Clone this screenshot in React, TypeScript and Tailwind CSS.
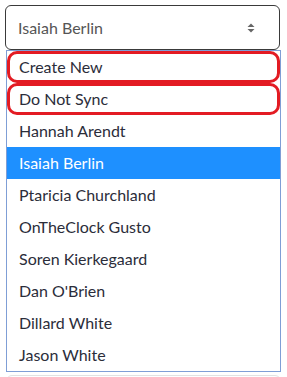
import { ChevronsUpDown } from "lucide-react";

const people = [
  "Create New",
  "Do Not Sync",
  "Hannah Arendt",
  "Isaiah Berlin",
  "Ptaricia Churchland",
  "OnTheClock Gusto",
  "Soren Kierkegaard",
  "Dan O'Brien",
  "Dillard White",
  "Jason White",
];

const flagged = ["Create New", "Do Not Sync"];

export default function App() {
  const selected = "Isaiah Berlin";

  return (
    <div className="w-[287px] h-[377px] overflow-hidden bg-white pt-[5px] pl-[5px] font-['Lato',sans-serif]">
      {/* Select */}
      <div className="w-[275px] h-[45px] flex items-center justify-between rounded-[6px] border border-[#3a3a3a] bg-white pl-[12px] pr-[24px]">
        <span className="text-[16px] text-[#555]">{selected}</span>
        <svg width="8" height="10" viewBox="0 0 8 10" className="text-[#666]">
          <path d="M4 0.5 L7.5 4 L0.5 4 Z" fill="currentColor" />
          <path d="M4 9.5 L7.5 6 L0.5 6 Z" fill="currentColor" />
        </svg>
      </div>

      {/* Options */}
      <div className="ml-px w-[275px] border border-[#7f9ed6] bg-white">
        {people.map((name) => (
          <div
            key={name}
            className={`relative h-[32px] flex items-center pl-[12px] text-[16px] ${
              name === selected ? "bg-[#1e90ff] text-white" : "text-[#2b2d3a]"
            }`}
          >
            {name}
            {flagged.includes(name) && (
              <div className="absolute inset-x-0 inset-y-0 rounded-[10px] border-[3px] border-[#e31b23]" />
            )}
          </div>
        ))}
      </div>

      <div className="ml-px mt-[3px] w-[275px] h-8 rounded-[6px] border border-[#e2e2e2]" />
    </div>
  );
}
